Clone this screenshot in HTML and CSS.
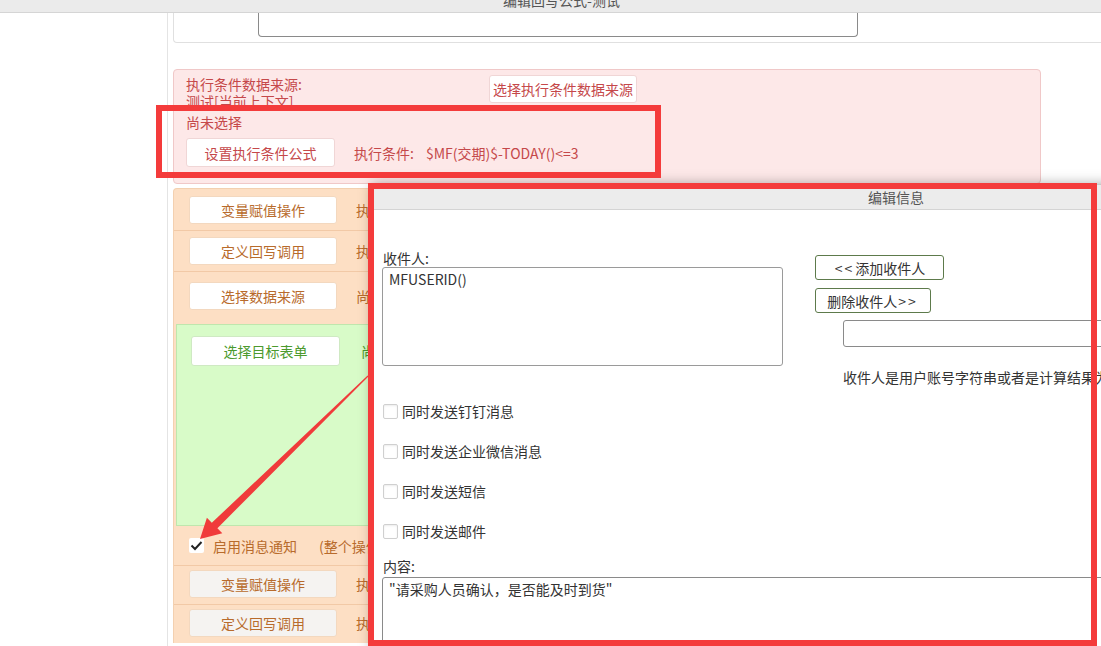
FILE: index.html
```html
<!DOCTYPE html>
<html lang="zh-CN">
<head>
<meta charset="utf-8">
<title>编辑回写公式-测试</title>
<link rel="stylesheet" href="styles.css">
</head>
<body>
<div class="topbar"><span class="topbar-title">编辑回写公式-测试</span></div>
<div class="page">
  <aside class="sidebar"></aside>
  <main class="main">
    <div class="prev-box"><div class="prev-area"></div></div>

    <section class="cond-panel">
      <div class="cond-head">
        <div class="cond-source">执行条件数据来源:<br>测试[当前上下文]</div>
        <button class="btn btn-pink btn-source">选择执行条件数据来源</button>
      </div>
      <div class="cond-status">尚未选择</div>
      <div class="cond-row">
        <button class="btn btn-pink btn-formula">设置执行条件公式</button>
        <span class="cond-label">执行条件:</span><span class="cond-expr">$MF(交期)$-TODAY()&lt;=3</span>
      </div>
    </section>

    <section class="ops-panel">
      <div class="op-row op-first">
        <button class="btn btn-orange">变量赋值操作</button><span class="op-note">执行条件：无</span>
      </div>
      <div class="op-row">
        <button class="btn btn-orange">定义回写调用</button><span class="op-note">执行条件：无</span>
      </div>
      <div class="op-row op-source">
        <button class="btn btn-orange">选择数据来源</button><span class="op-note">尚未选择</span>
      </div>
      <div class="target-box">
        <button class="btn btn-green-soft">选择目标表单</button><span class="target-note">尚未选择</span>
      </div>
      <div class="op-row op-notify">
        <span class="cb-checked"><svg width="15" height="15" viewBox="0 0 15 15"><path d="M2.5 7.5 L6 11 L12.5 4" fill="none" stroke="#222" stroke-width="2"/></svg></span>
        <span class="notify-label">启用消息通知</span>
        <span class="notify-note">(整个操作完成后发送消息)</span>
      </div>
      <div class="op-row op-low">
        <button class="btn btn-orange btn-dim">变量赋值操作</button><span class="op-note">执行条件：无</span>
      </div>
      <div class="op-row op-low op-last">
        <button class="btn btn-orange btn-dim">定义回写调用</button><span class="op-note">执行条件：无</span>
      </div>
    </section>
  </main>
</div>

<div class="dialog">
  <div class="dialog-head">编辑信息</div>
  <div class="dialog-body">
    <div class="recv">
      <div class="recv-left">
        <div class="recv-label">收件人:</div>
        <div class="recv-box">MFUSERID()</div>
      </div>
      <div class="recv-right">
        <button class="btn btn-line btn-add"><span class="lt">&lt;&lt;</span>添加收件人</button>
        <button class="btn btn-line btn-del">删除收件人<span class="lt">&gt;&gt;</span></button>
        <div class="recv-input"></div>
        <div class="recv-hint">收件人是用户账号字符串或者是计算结果为用户账号的表达式</div>
      </div>
    </div>
    <div class="checks">
      <label class="check-row"><span class="cb"></span><span class="cb-text">同时发送钉钉消息</span></label>
      <label class="check-row"><span class="cb"></span><span class="cb-text">同时发送企业微信消息</span></label>
      <label class="check-row"><span class="cb"></span><span class="cb-text">同时发送短信</span></label>
      <label class="check-row"><span class="cb"></span><span class="cb-text">同时发送邮件</span></label>
    </div>
    <div class="content-label">内容:</div>
    <div class="content-box">"请采购人员确认，是否能及时到货"</div>
  </div>
</div>

<div class="mark mark-cond"></div>
<div class="mark mark-dialog"></div>

<svg class="arrow" width="1101" height="646" viewBox="0 0 1101 646">
  <polygon points="368.4,376.4 217.4,528.2 222.3,533.2 200,539 206.9,517.7 211.8,522.8 367.6,375.6" fill="#f03b3b"/>
</svg>
</body>
</html>
```

FILE: styles.css
```css
* {
  box-sizing: border-box;
}

html,
body {
  margin: 0;
  padding: 0;
}

body {
  width: 1101px;
  height: 646px;
  overflow: hidden;
  position: relative;
  background: #fff;
  color: #333;
  font-family: "Noto Sans CJK SC", "Microsoft YaHei", sans-serif;
  font-size: 14px;
}

/* top title bar */
.topbar {
  height: 13px;
  background: #ebebeb;
  border-bottom: 1px solid #d5d5d5;
  overflow: hidden;
  text-align: center;
  padding-left: 22px;
}

.topbar-title {
  display: block;
  line-height: 20px;
  margin-top: -10px;
  color: #555;
}

.page {
  display: flex;
  height: 633px;
}

.sidebar {
  flex: none;
  width: 168px;
  border-right: 1px solid #e4e4e4;
}

.main {
  flex: 1;
  padding-left: 5px;
  min-width: 0;
}

.prev-box {
  height: 30px;
  border-left: 1px solid #e0e0e0;
  border-bottom: 1px solid #e0e0e0;
  border-bottom-left-radius: 4px;
  padding-left: 84px;
}

.prev-area {
  width: 600px;
  height: 24px;
  border: 1px solid #8a8a8a;
  border-top: none;
  border-radius: 0 0 4px 4px;
}

/* buttons */
.btn {
  font: inherit;
  display: inline-flex;
  align-items: center;
  justify-content: center;
  padding: 0;
  background: #fff;
  border-radius: 3px;
  cursor: pointer;
  white-space: nowrap;
}

/* pink execution condition panel */
.cond-panel {
  margin-top: 26px;
  width: 868px;
  background: #fde8e8;
  border: 1px solid #f0c8c8;
  border-radius: 4px;
  padding: 6px 12px 16px;
  color: #c5484a;
}

.cond-head {
  display: flex;
  align-items: flex-start;
}

.cond-source {
  width: 303px;
  line-height: 17px;
}

.btn-pink {
  color: #c5484a;
  border: 1px solid #f0d6d6;
}

.btn-source {
  width: 148px;
  height: 28px;
  margin-top: -1px;
}

.cond-status {
  margin-top: 4px;
  line-height: 17px;
}

.cond-row {
  margin-top: 7px;
  display: flex;
  align-items: center;
}

.btn-formula {
  width: 149px;
  height: 29px;
}

.cond-label {
  margin-left: 19px;
}

.cond-expr {
  margin-left: 12px;
}

/* orange operations panel */
.ops-panel {
  margin-top: 4px;
  width: 868px;
  background: #fddfc4;
  border: 1px solid #f3d0b0;
  border-bottom: none;
  border-radius: 4px 4px 0 0;
  color: #b86b2c;
}

.op-row {
  display: flex;
  align-items: center;
  padding: 6px 0 6px 15px;
  border-bottom: 1px solid #f2c9a6;
}

.op-first {
  padding-top: 7px;
}

.op-source {
  padding-top: 10px;
  padding-bottom: 14px;
  border-bottom: none;
}

.btn-orange {
  width: 148px;
  height: 28px;
  color: #b86b2c;
  border: 1px solid #f3d8bf;
}

.btn-dim {
  background: #f5f3f1;
}

.op-note {
  margin-left: 19px;
  white-space: nowrap;
}

.target-box {
  margin-left: 2px;
  height: 202px;
  background: #d8fbc8;
  border: 1px solid #bfe6ad;
  padding: 11px 0 0 14px;
  display: flex;
  align-items: flex-start;
  color: #4c9a2e;
}

.btn-green-soft {
  width: 149px;
  height: 30px;
  color: #4c9a2e;
  border: 1px solid #cfe9c3;
}

.target-note {
  margin-left: 21px;
  line-height: 30px;
}

.op-notify {
  height: 40px;
  padding: 0 0 0 15px;
}

.cb-checked {
  width: 15px;
  height: 15px;
  background: #fff;
  border-radius: 2px;
  display: inline-flex;
}

.notify-label {
  margin-left: 9px;
}

.notify-note {
  margin-left: 22px;
  white-space: nowrap;
}

.op-low {
  padding-top: 4px;
  padding-bottom: 6px;
}

.op-last {
  border-bottom: none;
}

/* dialog */
.dialog {
  position: absolute;
  left: 372px;
  top: 184px;
  width: 1048px;
  height: 480px;
  background: #fff;
  border: 1px solid #c8c8c8;
  box-shadow: 0 0 12px rgba(0, 0, 0, 0.35);
}

.dialog-head {
  height: 25px;
  background: #ececec;
  border-bottom: 1px solid #d4d4d4;
  text-align: center;
  line-height: 24px;
  color: #555;
}

.dialog-body {
  padding: 39px 0 0 10px;
}

.recv {
  display: flex;
  align-items: flex-start;
}

.recv-left {
  width: 400px;
}

.recv-label {
  line-height: 18px;
}

.recv-box {
  margin-left: -1px;
  height: 99px;
  border: 1px solid #9a9a9a;
  border-radius: 3px;
  padding: 2px 6px;
  line-height: 18px;
}

.recv-right {
  margin-left: 32px;
  padding-top: 6px;
  display: flex;
  flex-direction: column;
  align-items: flex-start;
}

.btn-line {
  height: 25px;
  color: #333;
  border: 1px solid #5d7a4b;
}

.btn-add {
  width: 129px;
}

.btn-del {
  width: 116px;
  margin-top: 8px;
}

.lt {
  letter-spacing: 2px;
  padding: 0 1px;
}

.recv-input {
  margin: 7px 0 0 28px;
  width: 300px;
  height: 27px;
  border: 1px solid #8a8a8a;
  border-radius: 3px;
}

.recv-hint {
  margin: 21px 0 0 28px;
  line-height: 18px;
  white-space: nowrap;
}

.checks {
  margin-top: 5px;
}

.check-row {
  height: 40px;
  display: flex;
  align-items: center;
}

.cb {
  width: 15px;
  height: 15px;
  border: 1px solid #d0d0d0;
  border-radius: 2px;
  box-shadow: inset 0 1px 2px rgba(0, 0, 0, 0.08);
}

.cb-text {
  margin-left: 4px;
}

.content-label {
  margin-top: 6px;
  line-height: 18px;
}

.content-box {
  margin-top: 2px;
  margin-left: -1px;
  width: 740px;
  height: 90px;
  border: 1px solid #8a8a8a;
  border-radius: 3px;
  padding: 2px 6px;
  line-height: 18px;
}

/* annotations */
.mark {
  position: absolute;
  border: 6px solid #f43b3b;
  pointer-events: none;
}

.mark-cond {
  left: 156px;
  top: 105px;
  width: 505px;
  height: 73px;
}

.mark-dialog {
  left: 368px;
  top: 183px;
  width: 729px;
  height: 463px;
}

.arrow {
  position: absolute;
  left: 0;
  top: 0;
  pointer-events: none;
}
```
